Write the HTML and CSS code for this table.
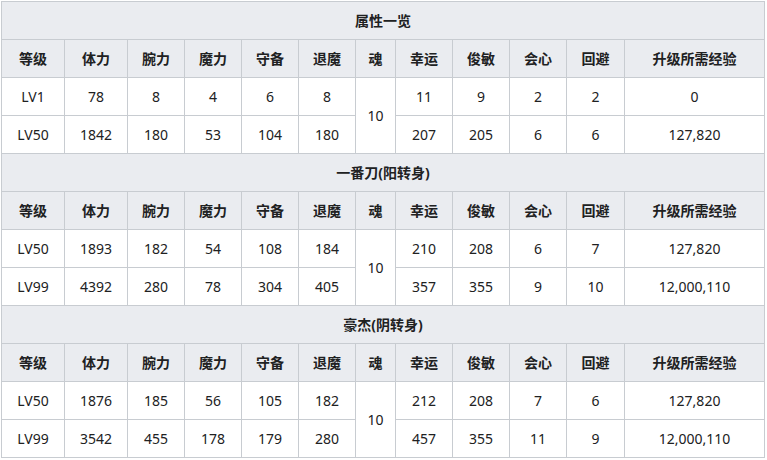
FILE: index.html
```html
<!DOCTYPE html>
<html lang="zh">
<head>
<meta charset="utf-8">
<link rel="stylesheet" href="styles.css">
</head>
<body>
<table class="stats">
<colgroup>
<col class="c63"><col class="c63"><col class="c57"><col class="c57"><col class="c57"><col class="c57"><col class="c40"><col class="c57"><col class="c57"><col class="c57"><col class="c58"><col class="c140">
</colgroup>
<tbody>
<tr><th colspan="12" class="title">属性一览</th></tr>
<tr><th>等级</th><th>体力</th><th>腕力</th><th>魔力</th><th>守备</th><th>退魔</th><th>魂</th><th>幸运</th><th>俊敏</th><th>会心</th><th>回避</th><th>升级所需经验</th></tr>
<tr><td>LV1</td><td>78</td><td>8</td><td>4</td><td>6</td><td>8</td><td rowspan="2">10</td><td>11</td><td>9</td><td>2</td><td>2</td><td>0</td></tr>
<tr><td>LV50</td><td>1842</td><td>180</td><td>53</td><td>104</td><td>180</td><td>207</td><td>205</td><td>6</td><td>6</td><td>127,820</td></tr>
<tr><th colspan="12" class="title">一番刀(阳转身)</th></tr>
<tr><th>等级</th><th>体力</th><th>腕力</th><th>魔力</th><th>守备</th><th>退魔</th><th>魂</th><th>幸运</th><th>俊敏</th><th>会心</th><th>回避</th><th>升级所需经验</th></tr>
<tr><td>LV50</td><td>1893</td><td>182</td><td>54</td><td>108</td><td>184</td><td rowspan="2">10</td><td>210</td><td>208</td><td>6</td><td>7</td><td>127,820</td></tr>
<tr><td>LV99</td><td>4392</td><td>280</td><td>78</td><td>304</td><td>405</td><td>357</td><td>355</td><td>9</td><td>10</td><td>12,000,110</td></tr>
<tr><th colspan="12" class="title">豪杰(阴转身)</th></tr>
<tr><th>等级</th><th>体力</th><th>腕力</th><th>魔力</th><th>守备</th><th>退魔</th><th>魂</th><th>幸运</th><th>俊敏</th><th>会心</th><th>回避</th><th>升级所需经验</th></tr>
<tr><td>LV50</td><td>1876</td><td>185</td><td>56</td><td>105</td><td>182</td><td rowspan="2">10</td><td>212</td><td>208</td><td>7</td><td>6</td><td>127,820</td></tr>
<tr><td>LV99</td><td>3542</td><td>455</td><td>178</td><td>179</td><td>280</td><td>457</td><td>355</td><td>11</td><td>9</td><td>12,000,110</td></tr>
</tbody>
</table>
</body>
</html>
```

FILE: styles.css
```css
html, body {
  margin: 0;
  padding: 0;
  background: #ffffff;
}
body {
  padding: 1px 0 0 1px;
  font-family: "Noto Sans", "Noto Sans CJK SC", sans-serif;
  font-size: 14px;
  color: #202122;
}
.stats {
  border-collapse: collapse;
  table-layout: fixed;
  width: 764px;
  background: #ffffff;
}
.c63 { width: 63px; }
.c57 { width: 57px; }
.c40 { width: 40px; }
.c58 { width: 58px; }
.c140 { width: 140px; }
.stats th,
.stats td {
  border: 1px solid #c8ccd1;
  height: 38px;
  padding: 0;
  text-align: center;
  vertical-align: middle;
  line-height: 20px;
  box-sizing: border-box;
}
.stats th {
  background: #eaecf0;
  font-weight: bold;
}
.stats td {
  font-weight: normal;
}
```
